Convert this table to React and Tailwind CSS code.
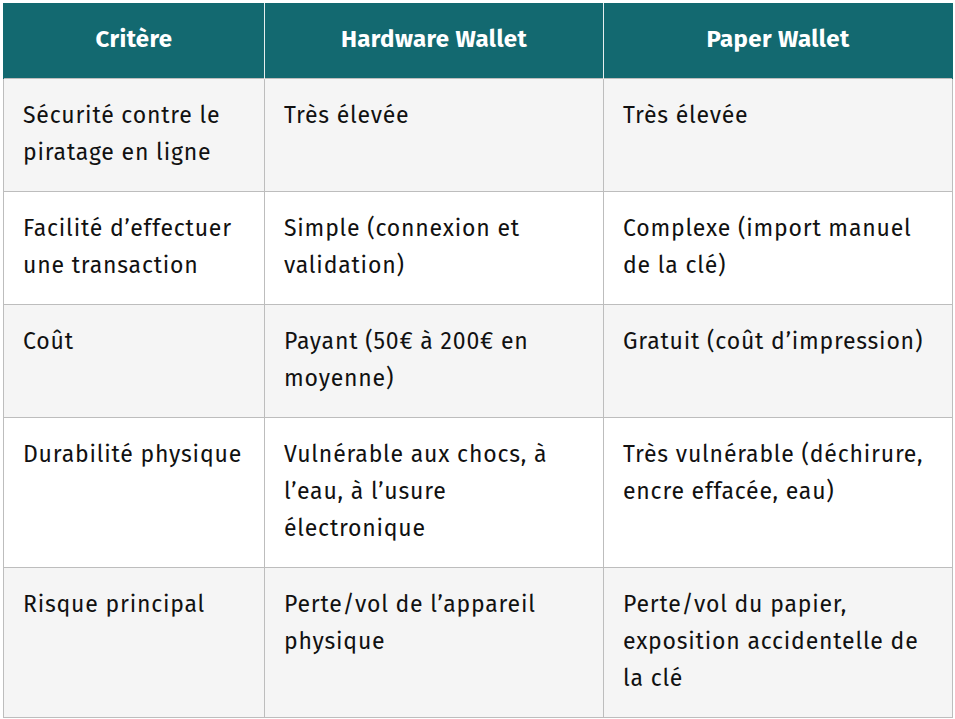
const HEADERS = ['Critère', 'Hardware Wallet', 'Paper Wallet'];

const ROWS = [
  [['Sécurité contre le', 'piratage en ligne'], ['Très élevée'], ['Très élevée']],
  [['Facilité d’effectuer', 'une transaction'], ['Simple (connexion et', 'validation)'], ['Complexe (import manuel', 'de la clé)']],
  [['Coût'], ['Payant (50€ à 200€ en', 'moyenne)'], ['Gratuit (coût d’impression)']],
  [['Durabilité physique'], ['Vulnérable aux chocs, à', 'l’eau, à l’usure', 'électronique'], ['Très vulnérable (déchirure,', 'encre effacée, eau)']],
  [['Risque principal'], ['Perte/vol de l’appareil', 'physique'], ['Perte/vol du papier,', 'exposition accidentelle de', 'la clé']],
];

const WIDTHS = ['w-[261px]', 'w-[339px]', 'w-[349px]'];

function Lines({ lines }) {
  return lines.map((l, i) => (
    <span key={i} className="block whitespace-nowrap">
      {l}
    </span>
  ));
}

export default function App() {
  return (
    <div className="bg-white p-[3px] min-h-screen" style={{ fontFamily: '"Fira Sans", "Open Sans", "Noto Sans", sans-serif' }}>
      <table className="border-collapse table-fixed w-[949px] text-[#111]">
        <thead>
          <tr className="bg-[#136970]">
            {HEADERS.map((h, i) => (
              <th
                key={h}
                className={`${WIDTHS[i]} h-[75px] pb-[3px] border-x border-[#e6eeee] first:border-l-[#136970] last:border-r-[#136970] text-white font-bold text-[24px] tracking-[0.4px] text-center align-middle`}
              >
                {h}
              </th>
            ))}
          </tr>
        </thead>
        <tbody>
          {ROWS.map((row, r) => (
            <tr key={r} className={r % 2 === 0 ? 'bg-[#f5f5f5]' : 'bg-white'}>
              {row.map((cell, c) => (
                <td
                  key={c}
                  className="border border-[#bdbdbd] align-top px-[19px] pt-[18px] pb-[20px] text-[23px] tracking-[0.8px] leading-[37px]"
                >
                  <Lines lines={cell} />
                </td>
              ))}
            </tr>
          ))}
        </tbody>
      </table>
    </div>
  );
}
